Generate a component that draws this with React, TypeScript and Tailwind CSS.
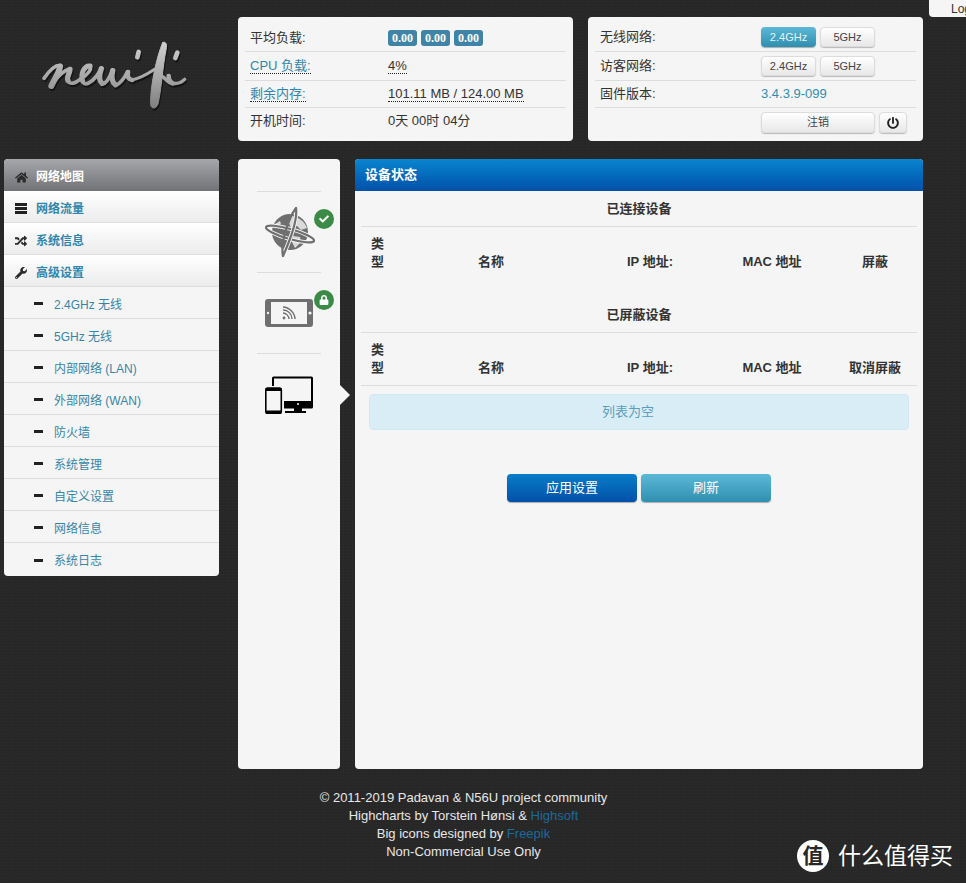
import { FaCheck, FaHome, FaLock, FaPowerOff, FaRandom, FaWrench } from "react-icons/fa";

const subItems = [
  "2.4GHz 无线",
  "5GHz 无线",
  "内部网络 (LAN)",
  "外部网络 (WAN)",
  "防火墙",
  "系统管理",
  "自定义设置",
  "网络信息",
  "系统日志",
];

// ------------ Drawings ------------
function LogoStrokes({ stroke, fill }: { stroke: string; fill: string }) {
  return (
    <g fill="none" stroke={stroke} strokeLinecap="round" strokeLinejoin="round">
      <path strokeWidth="11" d="M72 115C88 92 108 74 122 76" />
      <path strokeWidth="18" d="M120 80C118 98 104 116 94 138" />
      <path strokeWidth="11" d="M98 130C112 110 130 92 150 86" />
      <path strokeWidth="16" d="M150 88C150 100 138 112 144 122" />
      <path strokeWidth="11" d="M144 124C152 134 166 130 180 118C196 108 214 94 212 80" />
      <path strokeWidth="15" d="M210 78C194 76 180 100 188 124" />
      <path strokeWidth="11" d="M188 126C196 138 214 128 230 108C238 96 242 88 244 84" />
      <path strokeWidth="16" d="M244 86C238 104 236 122 246 130" />
      <path strokeWidth="11" d="M248 132C260 130 270 110 278 90" />
      <path strokeWidth="16" d="M278 92C274 110 274 126 286 134" />
      <path strokeWidth="11" d="M288 136C302 130 314 112 322 96" />
      <path strokeWidth="14" d="M324 96C322 108 324 118 336 120" />
      <path strokeWidth="9" d="M336 120C356 116 380 104 404 88" />
      <path
        strokeWidth="3"
        fill={fill}
        d="M428 8C438 2 442 14 438 30C428 80 424 150 414 192C408 208 394 208 392 194C390 140 410 50 428 8Z"
      />
      <path strokeWidth="10" d="M416 104C434 106 438 128 456 130" />
      <path strokeWidth="14" d="M446 108C446 118 450 126 458 130" />
      <path strokeWidth="10" d="M458 130C472 132 486 126 494 118" />
      <path strokeWidth="14" d="M356 36L352 52" />
      <path strokeWidth="14" d="M472 38L466 54" />
    </g>
  );
}

function Logo() {
  return (
    <svg viewBox="0 0 540 240" className="h-[80px] w-[180px]">
      <defs>
        <linearGradient id="logoFill" gradientUnits="userSpaceOnUse" x1="0" y1="0" x2="0" y2="210">
          <stop offset="0" stopColor="#d2d2d2" />
          <stop offset="0.55" stopColor="#a6a6a6" />
          <stop offset="1" stopColor="#7c7c7c" />
        </linearGradient>
      </defs>
      <g transform="translate(3 6)" opacity="0.5">
        <LogoStrokes stroke="#000" fill="#000" />
      </g>
      <LogoStrokes stroke="url(#logoFill)" fill="url(#logoFill)" />
    </svg>
  );
}

function GlobeIcon() {
  return (
    <svg viewBox="0 0 50 50" className="h-[50px] w-[50px]">
      <circle cx="25" cy="25" r="18" fill="#6f6f6f" />
      <path
        d="M27 9c7 1 13 6 15 12l-6 2-4-4-6 2-2-5zM28 29l7 1 1 5-6 6-3-6zM10 17l5-3 1 3-4 3z"
        fill="#f5f5f5"
        opacity="0.8"
      />
      <g fill="none">
        <ellipse cx="25" cy="27" rx="25" ry="5" transform="rotate(16 25 27)" stroke="#f5f5f5" strokeWidth="4" />
        <ellipse cx="25" cy="27" rx="25" ry="5" transform="rotate(16 25 27)" stroke="#6f6f6f" strokeWidth="2.200" />
        <path d="M31 1C33 14 22 40 18 49" stroke="#f5f5f5" strokeWidth="4" />
        <path d="M31 1C33 14 22 40 18 49C15 36 24 10 31 1Z" stroke="#6f6f6f" strokeWidth="2.200" />
      </g>
    </svg>
  );
}

function TabletIcon() {
  return (
    <svg viewBox="0 0 48 28" className="h-[28px] w-[48px]">
      <rect width="48" height="28" rx="3" fill="#6f6f6f" />
      <rect x="6" y="3" width="36" height="22" fill="#f5f5f5" />
      <circle cx="3" cy="14" r="1.2" fill="#f5f5f5" />
      <circle cx="45" cy="14" r="1.6" fill="#f5f5f5" />
      <g fill="none" stroke="#6f6f6f" strokeWidth="1.400">
        <path d="M18 8c6 0 12 6 12 12" />
        <path d="M18 11c5 0 9 4 9 9" />
        <path d="M18 14c3 0 6 3 6 6" />
      </g>
      <circle cx="19" cy="19" r="1.400" fill="#6f6f6f" />
    </svg>
  );
}

function DevicesIcon() {
  return (
    <svg viewBox="0 0 48 38" className="h-[38px] w-[48px]">
      <path d="M7 10V2a1.500 1.500 0 0 1 1.500-1.500h38A1.500 1.500 0 0 1 48 2v29a1.500 1.500 0 0 1-1.500 1.500H19v-5h27V2.500H9V10z" fill="#000" />
      <rect x="19" y="25" width="29" height="6" fill="#000" />
      <circle cx="33" cy="28" r="1" fill="#f5f5f5" />
      <path d="M29 32h8v3h4v2H20v-2h9z" fill="#000" />
      <rect x="0.800" y="12" width="15.500" height="25.500" rx="2" fill="#f5f5f5" stroke="#000" strokeWidth="1.600" />
      <rect x="0.800" y="12" width="15.500" height="3" fill="#000" />
      <rect x="0.800" y="34.500" width="15.500" height="3" fill="#000" />
    </svg>
  );
}

function RowsIcon() {
  return (
    <svg viewBox="0 0 12 11" className="h-[11px] w-[12px]" fill="#222">
      <rect width="12" height="3" />
      <rect y="4" width="12" height="3" />
      <rect y="8" width="12" height="3" />
    </svg>
  );
}

// ------------ Small parts ------------
function Badge({ children }: { children: React.ReactNode }) {
  return (
    <span className="w-[29px] rounded-[3px] bg-[#3f83a6] text-center text-[12px] font-bold leading-[16px] text-white [font-family:'Liberation_Serif',serif]">
      {children}
    </span>
  );
}

function SmallButton({ children, active, className }: { children: React.ReactNode; active?: boolean; className?: string }) {
  return (
    <button
      className={
        active
          ? "flex h-[20px] w-[55px] items-center justify-center rounded-[4px] bg-gradient-to-b from-[#5bb8d6] to-[#2f8fb0] text-[11px] text-[#e8f4f8] shadow-[0_1px_1px_rgba(0,0,0,0.3)]"
          : `flex items-center justify-center rounded-[4px] border border-[#dcdcdc] bg-gradient-to-b from-white to-[#e8e8e8] text-[11px] text-[#444] shadow-[0_1px_1px_rgba(0,0,0,0.25)] ${className ?? "h-[20px] w-[55px]"}`
      }
    >
      {children}
    </button>
  );
}

function Dotted({ children }: { children: React.ReactNode }) {
  return <span className="border-b border-dotted border-[#222] leading-[15px]">{children}</span>;
}

function NavRow({ icon, label, active }: { icon: React.ReactNode; label: string; active?: boolean }) {
  return (
    <div
      className={
        active
          ? "flex h-[32px] items-center rounded-t-[4px] bg-gradient-to-b from-[#a5a7aa] to-[#717376] pt-[4px] text-[12px] font-bold text-white"
          : "flex h-[32px] items-center border-b border-[#dddddd] bg-gradient-to-b from-white to-[#ececec] pt-[4px] text-[12px] font-bold text-[#2f86ad]"
      }
    >
      <span className="flex w-[32px] justify-center pl-[2px] text-[#2b2b2b]">{icon}</span>
      {label}
    </div>
  );
}

function DeviceTable({ title, last }: { title: string; last: string }) {
  return (
    <div>
      <div className="flex h-[35px] items-center justify-center border-b border-[#dddddd] font-bold">{title}</div>
      <div className="grid grid-cols-[34px_192px_126px_118px_88px] items-end pb-[8px] pt-[8px] font-bold leading-[18px]">
        <div className="ml-[10px] w-[13px] justify-self-start [overflow-wrap:anywhere]">类型</div>
        <div className="text-center">名称</div>
        <div className="text-center">IP 地址:</div>
        <div className="text-center">MAC 地址</div>
        <div className="text-center">{last}</div>
      </div>
    </div>
  );
}

export default function App() {
  return (
    <div className="relative h-[883px] overflow-hidden bg-[#272727] bg-[radial-gradient(#2e2e2e_1px,transparent_1px)] bg-[length:3px_3px] text-[13px] text-[#333] [font-family:'Liberation_Sans','Noto_Sans_CJK_SC',sans-serif]">
      {/* Login tab */}
      <div className="absolute right-0 top-0 flex h-[17px] w-[37px] items-center overflow-hidden rounded-bl-[4px] bg-[#f5f5f5] pl-[22px] text-[12px] text-[#333]">
        Log
      </div>

      <div className="flex pl-[4px]">
        {/* Left column */}
        <div className="w-[215px]">
          <div className="h-[159px] pl-[16px] pt-[40px]">
            <Logo />
          </div>
          <div className="overflow-hidden rounded-[4px] bg-[#f5f5f5]">
            <NavRow active icon={<FaHome size={13} />} label="网络地图" />
            <NavRow icon={<RowsIcon />} label="网络流量" />
            <NavRow icon={<FaRandom size={12} />} label="系统信息" />
            <NavRow icon={<FaWrench size={12} />} label="高级设置" />
            {subItems.map((item) => (
              <div
                key={item}
                className="flex h-[32px] items-center border-b border-[#dddddd] pt-[4px] text-[12px] text-[#3586a8] last:h-[33px] last:border-b-0 last:pb-[1px]"
              >
                <span className="mb-[2px] ml-[30px] mr-[11px] h-[3px] w-[9px] bg-[#222]" />
                {item}
              </div>
            ))}
          </div>
        </div>

        {/* Right column */}
        <div className="ml-[19px] w-[685px] pt-[17px]">
          <div className="flex justify-between">
            <div className="h-[124px] w-[335px] rounded-[4px] bg-[#f5f5f5] px-[7px]">
              <div className="flex h-[35px] border-b border-[#dddddd] pl-[5px] pt-[11px] leading-[20px]">
                <span className="w-[138px]">平均负载:</span>
                <div className="flex h-[20px] items-center gap-[4px]">
                  <Badge>0.00</Badge>
                  <Badge>0.00</Badge>
                  <Badge>0.00</Badge>
                </div>
              </div>
              <div className="flex h-[29px] items-center border-b border-[#dddddd] pl-[5px]">
                <span className="w-[138px]">
                  <span className="border-b border-dotted border-[#222] leading-[15px] text-[#2f86ad]">CPU 负载:</span>
                </span>
                <Dotted>4%</Dotted>
              </div>
              <div className="flex h-[27px] items-center border-b border-[#dddddd] pl-[5px]">
                <span className="w-[138px]">
                  <span className="border-b border-dotted border-[#222] leading-[15px] text-[#2f86ad]">剩余内存:</span>
                </span>
                <Dotted>101.11 MB / 124.00 MB</Dotted>
              </div>
              <div className="flex pl-[5px] pt-[3px] leading-[20px]">
                <span className="w-[138px]">开机时间:</span>
                <span>0天 00时 04分</span>
              </div>
            </div>

            <div className="h-[124px] w-[335px] rounded-[4px] bg-[#f5f5f5] px-[7px]">
              <div className="flex h-[35px] border-b border-[#dddddd] pl-[5px] pt-[10px] leading-[20px]">
                <span className="w-[161px]">无线网络:</span>
                <div className="flex gap-[4px]">
                  <SmallButton active>2.4GHz</SmallButton>
                  <SmallButton>5GHz</SmallButton>
                </div>
              </div>
              <div className="flex h-[29px] border-b border-[#dddddd] pl-[5px] pt-[4px] leading-[20px]">
                <span className="w-[161px]">访客网络:</span>
                <div className="flex gap-[4px]">
                  <SmallButton>2.4GHz</SmallButton>
                  <SmallButton>5GHz</SmallButton>
                </div>
              </div>
              <div className="flex h-[27px] items-center border-b border-[#dddddd] pl-[5px]">
                <span className="w-[161px]">固件版本:</span>
                <span className="text-[#2f8fb0]">3.4.3.9-099</span>
              </div>
              <div className="flex gap-[4px] pl-[166px] pt-[4px]">
                <SmallButton className="h-[21px] w-[114px]">注销</SmallButton>
                <SmallButton className="h-[21px] w-[28px]">
                  <FaPowerOff size={12} className="text-[#222]" />
                </SmallButton>
              </div>
            </div>
          </div>

          <div className="mt-[18px] flex h-[610px] justify-between">
            {/* Icon rail */}
            <div className="w-[102px] rounded-[4px] bg-[#f5f5f5] px-[19px] pt-[32px]">
              <div className="relative h-[81px] border-t border-[#dddddd]">
                <div className="absolute left-[8px] top-[15px]">
                  <GlobeIcon />
                </div>
                <span className="absolute left-[57px] top-[17px] flex h-[20px] w-[20px] items-center justify-center rounded-full bg-[#3c8a47] text-white">
                  <FaCheck size={10} />
                </span>
              </div>
              <div className="relative h-[81px] border-t border-[#dddddd]">
                <div className="absolute left-[8px] top-[26px]">
                  <TabletIcon />
                </div>
                <span className="absolute left-[57px] top-[17px] flex h-[20px] w-[20px] items-center justify-center rounded-full bg-[#3c8a47] text-white">
                  <FaLock size={10} />
                </span>
              </div>
              <div className="relative h-[81px] border-t border-[#dddddd]">
                <div className="absolute left-[8px] top-[22px]">
                  <DevicesIcon />
                </div>
                <span className="absolute left-[83px] top-[31px] h-0 w-0 border-y-[10px] border-l-[10px] border-y-transparent border-l-[#f5f5f5]" />
              </div>
            </div>

            {/* Main panel */}
            <div className="w-[568px] overflow-hidden rounded-[4px] bg-[#f5f5f5]">
              <div className="flex h-[32px] items-center bg-gradient-to-b from-[#0a85d0] to-[#0450a8] pl-[10px] font-bold text-white">
                设备状态
              </div>
              <div className="px-[6px] pt-[1px]">
                <DeviceTable title="已连接设备" last="屏蔽" />
                <div className="mt-[19px]">
                  <DeviceTable title="已屏蔽设备" last="取消屏蔽" />
                </div>
                <div className="border-t border-[#dddddd] px-[8px] pt-[8px]">
                  <div className="flex h-[36px] items-center justify-center rounded-[4px] border border-[#cfe8f1] bg-[#d9edf7] pr-[22px] text-[#5a9dbd]">
                    列表为空
                  </div>
                </div>
                <div className="mt-[44px] flex justify-center gap-[4px]">
                  <button className="h-[28px] w-[130px] rounded-[4px] bg-gradient-to-b from-[#0a7dc8] to-[#0450a8] text-white shadow-[0_1px_1px_rgba(0,0,0,0.3)]">
                    应用设置
                  </button>
                  <button className="h-[28px] w-[130px] rounded-[4px] bg-gradient-to-b from-[#5bb8d6] to-[#2f8fb0] text-white shadow-[0_1px_1px_rgba(0,0,0,0.3)]">
                    刷新
                  </button>
                </div>
              </div>
            </div>
          </div>
        </div>
      </div>

      {/* Footer */}
      <div className="mt-[20px] w-[927px] text-center text-[13px] leading-[18px] text-[#e8e8e8]">
        <div>© 2011-2019 Padavan &amp; N56U project community</div>
        <div>
          Highcharts by Torstein Hønsi &amp; <span className="text-[#1b6a9c]">Highsoft</span>
        </div>
        <div>
          Big icons designed by <span className="text-[#1b6a9c]">Freepik</span>
        </div>
        <div>Non-Commercial Use Only</div>
      </div>

      {/* Watermark */}
      <div className="absolute left-[797px] top-[840px] flex items-center text-white">
        <span className="flex h-[32px] w-[32px] items-center justify-center rounded-full bg-white text-[21px] font-bold text-[#272727]">
          值
        </span>
        <span className="ml-[9px] text-[23px] leading-[32px]">什么值得买</span>
      </div>
    </div>
  );
}
